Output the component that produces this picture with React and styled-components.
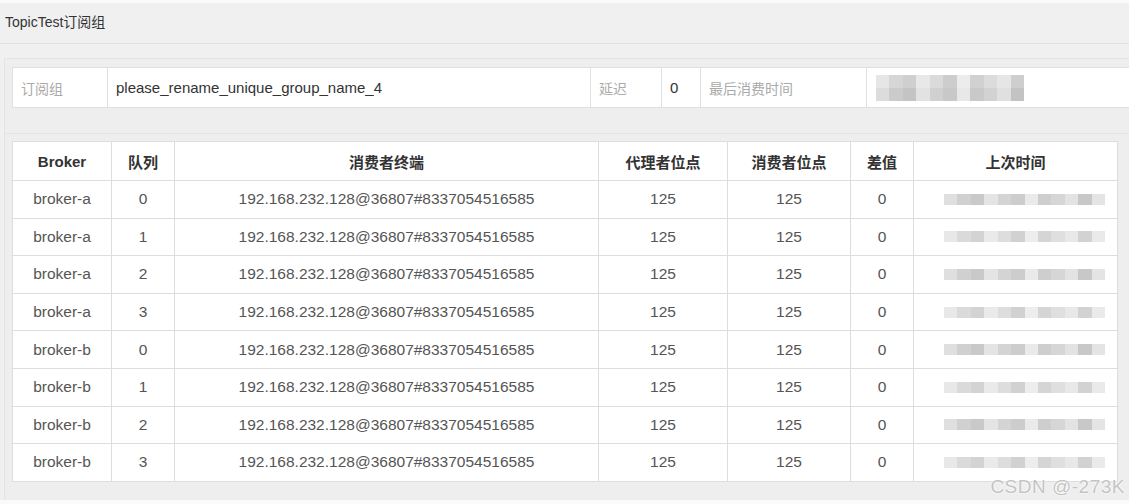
import React from "react";
import styled, { createGlobalStyle } from "styled-components";

const GlobalStyle = createGlobalStyle`
  html, body {
    margin: 0;
    padding: 0;
    background: #fafafa;
    font-family: "Liberation Sans", Arial, "Noto Sans CJK SC", sans-serif;
    overflow: hidden;
  }
`;

const columns = [
  { title: "Broker", width: 99 },
  { title: "队列", width: 63 },
  { title: "消费者终端", width: 424 },
  { title: "代理者位点", width: 129 },
  { title: "消费者位点", width: 123 },
  { title: "差值", width: 63 },
  { title: "上次时间", width: 204 },
];

const rows = [
  ["broker-a", 0],
  ["broker-a", 1],
  ["broker-a", 2],
  ["broker-a", 3],
  ["broker-b", 0],
  ["broker-b", 1],
  ["broker-b", 2],
  ["broker-b", 3],
];

// grey tones used for the pixelated (mosaic) timestamps
const tonesA = ["#dcdcdc", "#cbcbcb", "#c4c4c4", "#e2e2e2", "#d0d0d0", "#c8c8c8", "#e8e8e8", "#c9c9c9", "#d2d2d2", "#e0e0e0", "#c3c3c3", "#e2e2e2"];
const tonesB = ["#e6e6e6", "#d6d6d6", "#cfcfcf", "#e8e8e8", "#dadada", "#cdcdcd", "#ececec", "#d1d1d1", "#dcdcdc", "#e6e6e6", "#cecece", "#e8e8e8"];

const App = () => {
  return (
    <>
      <GlobalStyle />
      <Page>
        <Panel>
          <PanelHeader>TopicTest订阅组</PanelHeader>
          <PanelBody>
            <Section>
              <InfoTable>
                <tbody>
                  <tr>
                    <InfoLabel w={95}>订阅组</InfoLabel>
                    <InfoValue w={483}>please_rename_unique_group_name_4</InfoValue>
                    <InfoLabel w={71}>延迟</InfoLabel>
                    <InfoValue w={39}>0</InfoValue>
                    <InfoLabel w={166}>最后消费时间</InfoLabel>
                    <InfoValue>
                      <Mosaic>
                        <MosaicRow>
                          {tonesB.slice(0, 11).map((c, i) => (
                            <Block key={i} style={{ background: c }} />
                          ))}
                        </MosaicRow>
                        <MosaicRow>
                          {tonesA.slice(0, 11).map((c, i) => (
                            <Block key={i} style={{ background: c }} />
                          ))}
                        </MosaicRow>
                      </Mosaic>
                    </InfoValue>
                  </tr>
                </tbody>
              </InfoTable>
            </Section>
            <Section last>
              <DataTable>
                <colgroup>
                  {columns.map((c) => (
                    <col key={c.title} style={{ width: c.width }} />
                  ))}
                </colgroup>
                <thead>
                  <tr>
                    {columns.map((c) => (
                      <Th key={c.title}>{c.title}</Th>
                    ))}
                  </tr>
                </thead>
                <tbody>
                  {rows.map(([broker, queue], i) => (
                    <tr key={i}>
                      <Td>{broker}</Td>
                      <Td>{queue}</Td>
                      <Td>192.168.232.128@36807#8337054516585</Td>
                      <Td>125</Td>
                      <Td>125</Td>
                      <Td>0</Td>
                      <Td>
                        <Blur>
                          {(i % 2 ? tonesB : tonesA).map((c, j) => (
                            <Block key={j} style={{ background: c }} />
                          ))}
                        </Blur>
                      </Td>
                    </tr>
                  ))}
                </tbody>
              </DataTable>
            </Section>
          </PanelBody>
        </Panel>
        <Watermark>CSDN @-273K</Watermark>
      </Page>
    </>
  );
};

const Page = styled.div`
  position: relative;
  width: 1129px;
  height: 504px;
  padding-top: 3px;
  box-sizing: border-box;
  overflow: hidden;
`;

const Panel = styled.div`
  background: #f0f0f0;
  height: 497px;
`;

const PanelHeader = styled.div`
  height: 40px;
  line-height: 39px;
  padding-left: 5px;
  font-size: 14px;
  color: #333;
  border-bottom: 1px solid #e2e2e2;
`;

const PanelBody = styled.div`
  padding: 14px 0 0 4px;
`;

const Section = styled.div`
  background: #eeeeee;
  border-top: 1px solid #e4e4e4;
  border-left: 1px solid #e4e4e4;
  padding: ${(p) => (p.last ? "7px 0 18px 7px" : "8px 0 25px 7px")};
`;

const InfoTable = styled.table`
  border-collapse: collapse;
  background: #fff;
  width: 1130px;
  height: 41px;
`;

const InfoLabel = styled.td`
  width: ${(p) => p.w}px;
  border: 1px solid #e0e0e0;
  padding: 0 8px;
  color: #aaa;
  font-size: 14px;
  box-sizing: border-box;
`;

const InfoValue = styled.td`
  width: ${(p) => (p.w ? `${p.w}px` : "auto")};
  border: 1px solid #e0e0e0;
  padding: 0 8px;
  color: #333;
  font-size: 15px;
  box-sizing: border-box;
`;

const Mosaic = styled.div`
  display: flex;
  flex-direction: column;
  width: 148px;
  margin-left: 1px;
`;

const MosaicRow = styled.div`
  display: flex;
  height: 13px;
`;

const Block = styled.span`
  flex: 1;
`;

const DataTable = styled.table`
  border-collapse: collapse;
  table-layout: fixed;
  background: #fff;
  width: 1105px;
`;

const Th = styled.th`
  height: 38px;
  border: 1px solid #dddddd;
  color: #333;
  font-size: 15px;
  font-weight: bold;
  text-align: center;
  padding: 0;
`;

const Td = styled.td`
  height: 36.6px;
  border: 1px solid #dddddd;
  color: #555;
  font-size: 15.5px;
  text-align: center;
  padding: 0;
`;

const Blur = styled.div`
  display: flex;
  width: 161px;
  height: 11px;
  margin-left: 30px;
  opacity: 0.9;
`;

const Watermark = styled.div`
  position: absolute;
  right: 4px;
  bottom: 6px;
  font-size: 19px;
  color: #c4c4c4;
  letter-spacing: 0.5px;
  text-shadow: 0 0 2px #fff, 0 0 2px #fff;
`;

export default App;
